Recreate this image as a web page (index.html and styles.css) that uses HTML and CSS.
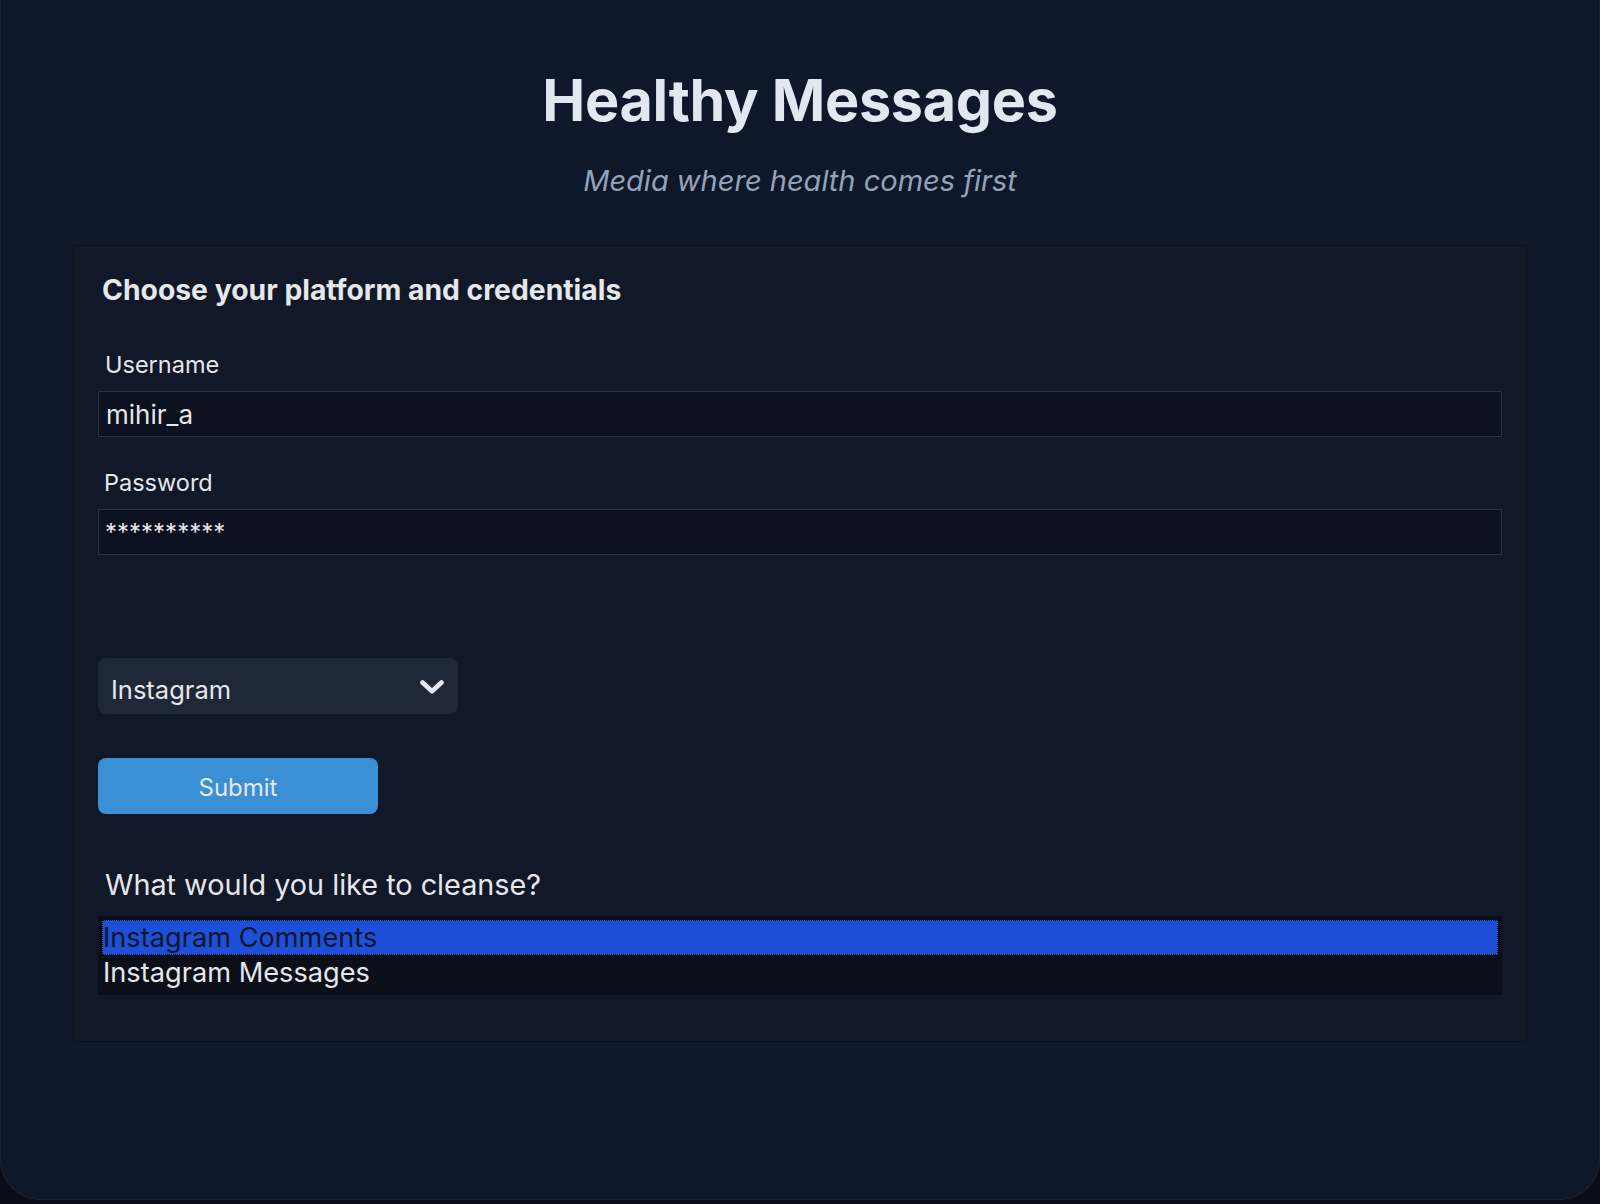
FILE: index.html
```html
<!DOCTYPE html>
<html lang="en">
<head>
<meta charset="utf-8">
<title>Healthy Messages</title>
<link rel="stylesheet" href="styles.css">
</head>
<body>
<div class="window">
  <h1 class="title">Healthy Messages</h1>
  <p class="subtitle">Media where health comes first</p>
  <section class="card">
    <h2 class="card-title">Choose your platform and credentials</h2>
    <label class="field-label" for="username">Username</label>
    <input class="field-input" id="username" type="text" value="mihir_a">
    <label class="field-label field-label-second" for="password">Password</label>
    <input class="field-input field-input-pass" id="password" type="text" value="**********">
    <div class="select">
      <span class="select-text">Instagram</span>
      <svg class="chevron" width="24" height="14" viewBox="0 0 24 14"><path d="M2.5 2.5 L12 11.3 L21.5 2.5" fill="none" stroke="#e5e7eb" stroke-width="4.6" stroke-linecap="round" stroke-linejoin="round"/></svg>
    </div>
    <button class="submit" type="button">Submit</button>
    <p class="question">What would you like to cleanse?</p>
    <div class="listbox">
      <div class="option option-selected">Instagram Comments</div>
      <div class="option">Instagram Messages</div>
    </div>
  </section>
</div>
</body>
</html>
```
FILE: styles.css
```css
* { box-sizing: border-box; }
html, body { margin: 0; padding: 0; }
body {
  background: #080c16;
  font-family: Inter, "Noto Sans", sans-serif;
  height: 1204px;
  overflow: hidden;
}
.window {
  height: 1200px;
  background: #0f172a;
  border: 1px solid #1b2333;
  border-top: 0;
  border-radius: 0 0 40px 40px;
  padding-top: 64px;
  overflow: hidden;
}
.title {
  margin: 0;
  text-align: center;
  font-size: 57.5px;
  line-height: 72px;
  font-weight: 700;
  letter-spacing: -0.3px;
  color: #e2e8f0;
}
.subtitle {
  margin: 27px 0 0;
  text-align: center;
  font-size: 29px;
  line-height: 36px;
  font-style: italic;
  color: #94a3b8;
}
.card {
  margin: 46px 72px 0;
  background: #111827;
  border: 1px solid #0b101c;
  padding: 27px 24px 46px;
  display: flex;
  flex-direction: column;
  align-items: flex-start;
}
.card-title {
  margin: 0;
  font-size: 28.3px;
  line-height: 34px;
  font-weight: 700;
  color: #e5e7eb;
  padding-left: 4px;
}
.field-label {
  display: block;
  margin: 44px 0 0 7px;
  font-size: 23.5px;
  line-height: 28px;
  color: #e5e7eb;
}
.field-label-second { margin-top: 32px; margin-left: 6px; }
.field-input {
  display: block;
  width: 100%;
  height: 46px;
  margin-top: 12px;
  background: #0b111e;
  border: 1px solid #283242;
  border-radius: 0;
  padding: 0 6px 0 7px;
  font-family: Inter, "Noto Sans", sans-serif;
  font-size: 26px;
  color: #e5e7eb;
  outline: none;
}
.field-input-pass { font-size: 24px; padding-left: 6px; }
.select {
  margin-top: 103px;
  width: 360px;
  height: 56px;
  background: #1e2837;
  border-radius: 8px;
  display: flex;
  align-items: center;
  justify-content: space-between;
  padding: 8px 14px 0 13px;
}
.select-text {
  font-size: 25.5px;
  line-height: 32px;
  color: #e5e7eb;
}
.chevron { display: block; margin-top: -6px; }
.submit {
  margin-top: 44px;
  width: 280px;
  height: 56px;
  background: #3b8fd4;
  border: 0;
  border-radius: 8px;
  font-family: Inter, "Noto Sans", sans-serif;
  font-size: 24px;
  color: #e5e7eb;
  padding: 2px 0 0;
}
.question {
  margin: 54px 0 0 7px;
  font-size: 28.8px;
  line-height: 34px;
  color: #e5e7eb;
}
.listbox {
  margin-top: 14px;
  width: 100%;
  background: #0a0f1a;
  padding: 4px 4px 5px;
}
.option {
  height: 35px;
  line-height: 35px;
  font-size: 27.2px;
  color: #e5e7eb;
  padding-left: 1px;
  white-space: nowrap;
}
.option-selected {
  background: #1e4fd8;
  color: #0f172a;
  outline: 1px dotted #0a0f1a;
  outline-offset: -1px;
}
```
